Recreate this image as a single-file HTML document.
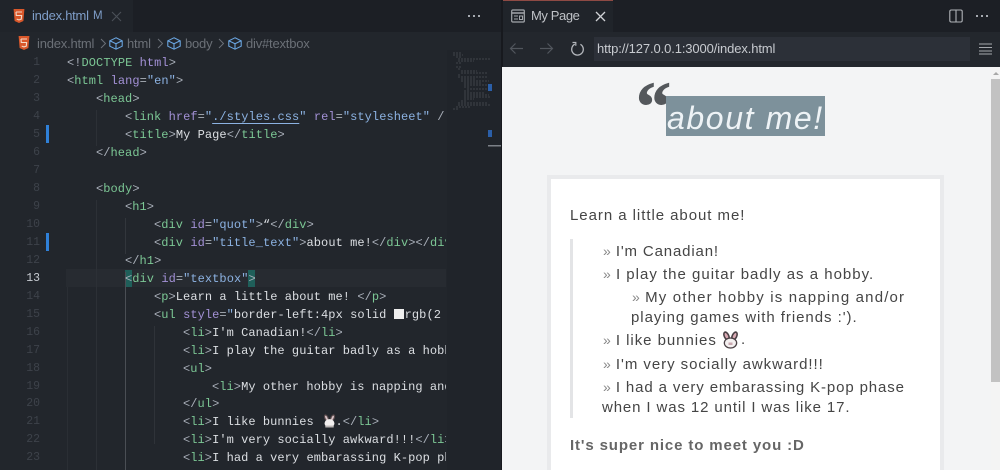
<!DOCTYPE html>
<html lang="en">
<head>
<meta charset="utf-8">
<title>My Page</title>
<style>
html,body{margin:0;padding:0;background:#21252b}
#root{position:relative;width:1000px;height:470px;overflow:hidden;background:#21252b;font-family:"Liberation Sans",sans-serif;filter:blur(.35px)}
.a{position:absolute;white-space:pre}
.box{position:absolute}
.c{position:absolute;white-space:pre;font-family:"Liberation Mono",monospace;font-size:12px;letter-spacing:.06px;line-height:18px;height:18px;color:#dcdfe3}
.n{position:absolute;width:24px;left:16px;text-align:right;font-family:"Liberation Mono",monospace;font-size:11.5px;line-height:18px;color:#3d424a}
.b{color:#a9afb9}.t{color:#7cc795}.p{color:#a391d6}.s{color:#8cb2e2}.d{color:#a9afb9}
.r{position:absolute;white-space:pre;font-size:15px;letter-spacing:.95px;line-height:20px;color:#454545}
.m{color:#888;font-size:14px;letter-spacing:0}
</style>
</head>
<body>
<div id="root">
  <!-- left top bars -->
  <div class="box" style="left:0;top:0;width:501px;height:32px;background:#1c1f25"></div>
  <div class="box" style="left:0;top:0;width:133px;height:32px;background:#20242a"></div>
  <div class="box" style="left:0;top:32px;width:501px;height:438px;background:#22262c"></div>
  <div class="box" style="left:447px;top:50px;width:54px;height:420px;background:#20242a"></div>

  <!-- tab -->
  <svg class="box" style="left:13px;top:9px" width="12" height="14" viewBox="0 0 12 14"><path d="M.6 0h10.8l-1 12-4.4 2-4.4-2z" fill="#d9582b"/><path d="M3 3h6M3 3l.3 3.5h5.3l-.3 3.6-2.3.8-2.3-.8" fill="none" stroke="#f3d9c8" stroke-width="1.1"/></svg>
  <div class="a" style="left:32px;top:8px;font-size:13px;line-height:16px;color:#7f9ec9;letter-spacing:-.25px">index.html</div>
  <div class="a" style="left:93px;top:9px;font-size:11.5px;line-height:15px;color:#7f9ec9">M</div>
  <svg class="box" style="left:111px;top:11px" width="11" height="11" viewBox="0 0 11 11"><path d="M1 1l9 9M10 1l-9 9" stroke="#4b5058" stroke-width="1.1"/></svg>
  <div class="box" style="left:473px;top:15px;width:2px;height:2px;background:#a5a9b0;box-shadow:5px 0 #a5a9b0,-5px 0 #a5a9b0"></div>

  <!-- breadcrumbs -->
  <svg class="box" style="left:18px;top:36px" width="12" height="14" viewBox="0 0 12 14"><path d="M.6 0h10.8l-1 12-4.4 2-4.4-2z" fill="#d9582b"/><path d="M3 3h6M3 3l.3 3.5h5.3l-.3 3.6-2.3.8-2.3-.8" fill="none" stroke="#f3d9c8" stroke-width="1.1"/></svg>
  <div class="a" style="left:37px;top:36px;font-size:13px;line-height:16px;color:#6b7077;letter-spacing:-.2px">index.html</div>
  <svg class="box" style="left:100px;top:38px" width="7" height="11" viewBox="0 0 7 11"><path d="M1 1l4.500 4.500L1 10" fill="none" stroke="#6b7077"/></svg>
  <svg class="box" style="left:109px;top:37px" width="14" height="13" viewBox="0 0 14 13"><path d="M7 .8l6.200 3v5.400L7 12.200.8 9.200V3.800zM.8 3.800L7 6.800l6.200-3M7 6.800v5.400" fill="none" stroke="#6aa5e0" stroke-width="1.1"/></svg>
  <div class="a" style="left:127px;top:36px;font-size:13px;line-height:16px;color:#6b7077;letter-spacing:-.2px">html</div>
  <svg class="box" style="left:157px;top:38px" width="7" height="11" viewBox="0 0 7 11"><path d="M1 1l4.500 4.500L1 10" fill="none" stroke="#6b7077"/></svg>
  <svg class="box" style="left:167px;top:37px" width="14" height="13" viewBox="0 0 14 13"><path d="M7 .8l6.200 3v5.400L7 12.200.8 9.200V3.800zM.8 3.800L7 6.800l6.200-3M7 6.800v5.400" fill="none" stroke="#6aa5e0" stroke-width="1.1"/></svg>
  <div class="a" style="left:185px;top:36px;font-size:13px;line-height:16px;color:#6b7077;letter-spacing:-.2px">body</div>
  <svg class="box" style="left:218px;top:38px" width="7" height="11" viewBox="0 0 7 11"><path d="M1 1l4.500 4.500L1 10" fill="none" stroke="#6b7077"/></svg>
  <svg class="box" style="left:228px;top:37px" width="14" height="13" viewBox="0 0 14 13"><path d="M7 .8l6.200 3v5.400L7 12.200.8 9.200V3.800zM.8 3.800L7 6.800l6.200-3M7 6.800v5.400" fill="none" stroke="#6aa5e0" stroke-width="1.1"/></svg>
  <div class="a" style="left:246px;top:36px;font-size:13px;line-height:16px;color:#6b7077;letter-spacing:-.2px">div#textbox</div>

  <!-- active line -->
  <div class="box" style="left:66px;top:269px;width:380px;height:18px;background:#272b31"></div>
  <div class="box" style="left:125px;top:270px;width:7px;height:17px;background:#1f5f5a"></div>
  <div class="box" style="left:248px;top:270px;width:7px;height:17px;background:#1f5f5a"></div>

  <!-- indent guides -->
  <div class="box" style="left:67px;top:287px;width:1px;height:183px;background:#2a2e34"></div>
  <div class="box" style="left:96px;top:110px;width:1px;height:36px;background:#2c3036"></div>
  <div class="box" style="left:96px;top:200px;width:1px;height:270px;background:#2c3036"></div>
  <div class="box" style="left:125px;top:218px;width:1px;height:36px;background:#32363c"></div>
  <div class="box" style="left:125px;top:272px;width:1px;height:198px;background:#4a4e54"></div>
  <div class="box" style="left:154px;top:326px;width:1px;height:118px;background:#2f3339"></div>

  <!-- gutter markers -->
  <div class="box" style="left:46px;top:125px;width:3px;height:18px;background:#2f80d8"></div>
  <div class="box" style="left:46px;top:233px;width:3px;height:18px;background:#2f80d8"></div>

  <!-- line numbers -->
  <div class="n" style="top:54px">1</div><div class="n" style="top:72px">2</div><div class="n" style="top:90px">3</div><div class="n" style="top:108px">4</div><div class="n" style="top:126px">5</div><div class="n" style="top:144px">6</div><div class="n" style="top:162px">7</div><div class="n" style="top:180px">8</div><div class="n" style="top:198px">9</div><div class="n" style="top:216px">10</div><div class="n" style="top:234px">11</div><div class="n" style="top:252px">12</div><div class="n" style="top:270px;color:#c8ccd2">13</div><div class="n" style="top:288px">14</div><div class="n" style="top:306px">15</div><div class="n" style="top:324px">16</div><div class="n" style="top:342px">17</div><div class="n" style="top:360px">18</div><div class="n" style="top:378px">19</div><div class="n" style="top:395px">20</div><div class="n" style="top:413px">21</div><div class="n" style="top:431px">22</div><div class="n" style="top:449px">23</div>

  <!-- code -->
  <div class="box" style="left:0;top:50px;width:446px;height:420px;overflow:hidden">
    <div style="position:absolute;left:0;top:-50px;width:446px;height:470px">
      <div class="c" style="left:67px;top:54px"><span class="b">&lt;!</span><span class="t">DOCTYPE</span> <span class="p">html</span><span class="b">&gt;</span></div>
      <div class="c" style="left:67px;top:72px"><span class="b">&lt;</span><span class="t">html</span> <span class="p">lang</span><span class="b">=</span><span class="s">"en"</span><span class="b">&gt;</span></div>
      <div class="c" style="left:96px;top:90px"><span class="b">&lt;</span><span class="t">head</span><span class="b">&gt;</span></div>
      <div class="c" style="left:125px;top:108px"><span class="b">&lt;</span><span class="t">link</span> <span class="p">href</span><span class="b">=</span><span class="s">"<span style="text-decoration:underline;text-underline-offset:3px">./styles.css</span>"</span> <span class="p">rel</span><span class="b">=</span><span class="s">"stylesheet"</span> <span class="b">/</span></div>
      <div class="c" style="left:125px;top:126px"><span class="b">&lt;</span><span class="t">title</span><span class="b">&gt;</span>My Page<span class="b">&lt;/</span><span class="t">title</span><span class="b">&gt;</span></div>
      <div class="c" style="left:96px;top:144px"><span class="b">&lt;/</span><span class="t">head</span><span class="b">&gt;</span></div>
      <div class="c" style="left:96px;top:180px"><span class="b">&lt;</span><span class="t">body</span><span class="b">&gt;</span></div>
      <div class="c" style="left:125px;top:198px"><span class="b">&lt;</span><span class="t">h1</span><span class="b">&gt;</span></div>
      <div class="c" style="left:154px;top:216px"><span class="b">&lt;</span><span class="t">div</span> <span class="p">id</span><span class="b">=</span><span class="s">"quot"</span><span class="b">&gt;</span>“<span class="b">&lt;/</span><span class="t">div</span><span class="b">&gt;</span></div>
      <div class="c" style="left:154px;top:234px"><span class="b">&lt;</span><span class="t">div</span> <span class="p">id</span><span class="b">=</span><span class="s">"title_text"</span><span class="b">&gt;</span>about me!<span class="b">&lt;/</span><span class="t">div</span><span class="b">&gt;&lt;/</span><span class="t">div</span></div>
      <div class="c" style="left:125px;top:252px"><span class="b">&lt;/</span><span class="t">h1</span><span class="b">&gt;</span></div>
      <div class="c" style="left:125px;top:270px"><span class="b">&lt;</span><span class="t">div</span> <span class="p">id</span><span class="b">=</span><span class="s">"textbox"</span><span class="b">&gt;</span></div>
      <div class="c" style="left:154px;top:288px"><span class="b">&lt;</span><span class="t">p</span><span class="b">&gt;</span>Learn a little about me! <span class="b">&lt;/</span><span class="t">p</span><span class="b">&gt;</span></div>
      <div class="c" style="left:154px;top:306px"><span class="b">&lt;</span><span class="t">ul</span> <span class="p">style</span><span class="b">=</span><span class="s">"</span>border-left:4px solid <span style="display:inline-block;width:10px;height:10px;background:#eee;vertical-align:-1px;margin-right:1px"></span>rgb(2</div>
      <div class="c" style="left:183px;top:324px"><span class="b">&lt;</span><span class="t">li</span><span class="b">&gt;</span>I'm Canadian!<span class="b">&lt;/</span><span class="t">li</span><span class="b">&gt;</span></div>
      <div class="c" style="left:183px;top:342px"><span class="b">&lt;</span><span class="t">li</span><span class="b">&gt;</span>I play the guitar badly as a hobby.</div>
      <div class="c" style="left:183px;top:360px"><span class="b">&lt;</span><span class="t">ul</span><span class="b">&gt;</span></div>
      <div class="c" style="left:212px;top:378px"><span class="b">&lt;</span><span class="t">li</span><span class="b">&gt;</span>My other hobby is napping and/or</div>
      <div class="c" style="left:183px;top:395px"><span class="b">&lt;/</span><span class="t">ul</span><span class="b">&gt;</span></div>
      <div class="c" style="left:183px;top:413px"><span class="b">&lt;</span><span class="t">li</span><span class="b">&gt;</span>I like bunnies   .<span class="b">&lt;/</span><span class="t">li</span><span class="b">&gt;</span></div>
      <div class="c" style="left:183px;top:431px"><span class="b">&lt;</span><span class="t">li</span><span class="b">&gt;</span>I'm very socially awkward!!!<span class="b">&lt;/</span><span class="t">li</span><span class="b">&gt;</span></div>
      <div class="c" style="left:183px;top:449px"><span class="b">&lt;</span><span class="t">li</span><span class="b">&gt;</span>I had a very embarassing K-pop phase</div>
      <svg class="box" style="left:323px;top:414px" width="13" height="14" viewBox="0 0 17 18"><ellipse cx="4.500" cy="5" rx="2.800" ry="5" transform="rotate(-25 4.500 5)" fill="#5a4a4c"/><ellipse cx="12.500" cy="5" rx="2.800" ry="5" transform="rotate(25 12.500 5)" fill="#5a4a4c"/><ellipse cx="4.500" cy="5" rx="1.200" ry="3.200" transform="rotate(-25 4.500 5)" fill="#d8c4c8"/><ellipse cx="12.500" cy="5" rx="1.200" ry="3.200" transform="rotate(25 12.500 5)" fill="#d8c4c8"/><ellipse cx="8.500" cy="12" rx="6.500" ry="5.500" fill="#f1eeee"/><rect x="3" y="15" width="11" height="2.500" fill="#b9b5b5"/></svg>
    </div>
  </div>

  <!-- minimap -->
  <svg class="box" style="left:447px;top:50px" width="54" height="100" viewBox="0 0 54 100">
    <g stroke="#8a8f96" stroke-width=".5" stroke-dasharray="2 1" opacity=".6">
      <path d="M6 3h8M6 5h10M9 7h5M11 9h32M11 11h16M9 13h5M9 17h5M11 19h3M14 21h16M14 23h26M11 25h3M11 27h30M14 29h14M14 31h28M17 33h18M17 35h25M17 37h6M20 39h22M17 41h6M17 43h20M17 45h25M17 47h26M17 49h10M14 51h5M11 53h30M11 55h32M9 57h14M6 59h5"/>
    </g>
    <rect x="41" y="34" width="4" height="7" fill="#2b5fa8"/>
    <rect x="41" y="80" width="4" height="7" fill="#2b5fa8"/>
    <rect x="41" y="95" width="13" height="1.500" fill="#7b8087"/>
  </svg>

  <!-- right panel chrome -->
  <div class="box" style="left:501px;top:0;width:2px;height:470px;background:#17191e"></div>
  <div class="box" style="left:503px;top:0;width:497px;height:32px;background:#1c1f25"></div>
  <div class="box" style="left:503px;top:0;width:110px;height:32px;background:#20242a"></div>
  <div class="box" style="left:503px;top:0;width:110px;height:1px;background:#8e4a44"></div>
  <div class="box" style="left:503px;top:32px;width:497px;height:35px;background:#23272d"></div>

  <svg class="box" style="left:511px;top:9px" width="14" height="14" viewBox="0 0 14 14"><rect x=".7" y="1" width="12.600" height="12" rx="1" fill="none" stroke="#a4a7ac" stroke-width="1.200"/><path d="M1 4h12" stroke="#a4a7ac" stroke-width="1.500"/><path d="M3 7h4M3 10h4" stroke="#a4a7ac"/><rect x="8.500" y="7" width="3" height="3.500" fill="none" stroke="#a4a7ac"/></svg>
  <div class="a" style="left:531px;top:8px;font-size:13px;line-height:16px;color:#bfc2c7;letter-spacing:-.4px">My Page</div>
  <svg class="box" style="left:595px;top:11px" width="11" height="11" viewBox="0 0 11 11"><path d="M1 1l9 9M10 1l-9 9" stroke="#d0d2d6" stroke-width="1.300"/></svg>

  <svg class="box" style="left:509px;top:42px" width="15" height="13" viewBox="0 0 15 13"><path d="M14 6.500H1.500M6.500 1.500l-5 5 5 5" fill="none" stroke="#51565d" stroke-width="1.200"/></svg>
  <svg class="box" style="left:539px;top:42px" width="15" height="13" viewBox="0 0 15 13"><path d="M1 6.500h12.500M8.500 1.500l5 5-5 5" fill="none" stroke="#51565d" stroke-width="1.200"/></svg>
  <svg class="box" style="left:570px;top:41px" width="15" height="15" viewBox="0 0 15 15"><path d="M4.800 3.200a5.800 5.800 0 1 0 5.600.1" fill="none" stroke="#b4b7bc" stroke-width="1.300"/><path d="M2.500 1.500h3.300v3.300" fill="none" stroke="#b4b7bc" stroke-width="1.200"/></svg>

  <div class="box" style="left:594px;top:37px;width:376px;height:24px;background:#2c3038"></div>
  <div class="a" style="left:597px;top:41px;font-size:13px;line-height:16px;color:#c8cbd0;letter-spacing:-.12px">http://127.0.0.1:3000/index.html</div>
  <svg class="box" style="left:979px;top:43px" width="13" height="12" viewBox="0 0 13 12"><path d="M0 1h13M0 4.500h13M0 8h13M0 11h13" stroke="#a5a8ad" stroke-width="1.100"/></svg>

  <svg class="box" style="left:949px;top:9px" width="14" height="14" viewBox="0 0 14 14"><rect x=".8" y="1" width="12.400" height="12" rx="1.500" fill="none" stroke="#b0b3b8" stroke-width="1.100"/><path d="M7 1v12" stroke="#b0b3b8" stroke-width="1.100"/></svg>
  <div class="box" style="left:976px;top:15px;width:2px;height:2px;background:#a5a9b0;box-shadow:5px 0 #a5a9b0,10px 0 #a5a9b0"></div>

  <!-- page -->
  <div class="box" style="left:502px;top:67px;width:498px;height:403px;background:#f3f4f5"></div>
  <div class="box" style="left:991px;top:67px;width:9px;height:403px;background:#f4f4f4"></div>
  <div class="box" style="left:991px;top:79px;width:9px;height:303px;background:#c2c2c2"></div>
  <div class="box" style="left:993px;top:72px;width:0;height:0;border-left:3px solid transparent;border-right:3px solid transparent;border-bottom:3px solid #a8a8a8"></div>

  <div class="a" style="left:636px;top:68px;font-family:'Liberation Serif',serif;font-weight:bold;font-size:70px;line-height:80px;color:#54585c;-webkit-text-stroke:.9px #54585c">“</div>
  <div class="box" style="left:666px;top:96px;width:159px;height:40px;background:#7d919b"></div>
  <div class="a" style="left:667px;top:97px;font-style:italic;font-size:32px;line-height:42px;letter-spacing:1.600px;color:#eef3f6">about me!</div>

  <div class="box" style="left:547px;top:175px;width:389px;height:300px;background:#fff;border:4px solid #e9eaec"></div>
  <div class="box" style="left:570px;top:239px;width:3px;height:179px;background:#e3e4e6"></div>

  <div class="r" style="left:570px;top:206px">Learn a little about me!</div>
  <div class="r" style="left:603px;top:241px;letter-spacing:.85px"><span class="m">»</span> I'm Canadian!</div>
  <div class="r" style="left:603px;top:264px;letter-spacing:1px"><span class="m">»</span> I play the guitar badly as a hobby.</div>
  <div class="r" style="left:632px;top:287px;letter-spacing:1.17px"><span class="m">»</span> My other hobby is napping and/or</div>
  <div class="r" style="left:631px;top:308px">playing games with friends :').</div>
  <div class="r" style="left:603px;top:330px"><span class="m">»</span> I like bunnies</div>
  <svg class="box" style="left:722px;top:331px" width="17" height="18" viewBox="0 0 17 18"><ellipse cx="4.500" cy="5" rx="3" ry="5" transform="rotate(-25 4.500 5)" fill="#4a4044"/><ellipse cx="12.500" cy="5" rx="3" ry="5" transform="rotate(25 12.500 5)" fill="#4a4044"/><ellipse cx="4.500" cy="5" rx="1.400" ry="3.300" transform="rotate(-25 4.500 5)" fill="#d9a9b3"/><ellipse cx="12.500" cy="5" rx="1.400" ry="3.300" transform="rotate(25 12.500 5)" fill="#d9a9b3"/><ellipse cx="8.500" cy="12" rx="6.800" ry="5.600" fill="#4a4044"/><ellipse cx="8.500" cy="12" rx="5.500" ry="4.400" fill="#f4f0f0"/><rect x="6.500" y="11.500" width="4" height="2.500" fill="#c9a9b0"/></svg>
  <div class="r" style="left:741px;top:330px">.</div>
  <div class="r" style="left:603px;top:354px"><span class="m">»</span> I'm very socially awkward!!!</div>
  <div class="r" style="left:603px;top:377px;letter-spacing:.87px"><span class="m">»</span> I had a very embarassing K-pop phase</div>
  <div class="r" style="left:602px;top:398px;letter-spacing:.88px">when I was 12 until I was like 17.</div>
  <div class="r" style="left:570px;top:436px;font-weight:bold;color:#666;letter-spacing:.87px">It's super nice to meet you :D</div>
</div>
</body>
</html>
